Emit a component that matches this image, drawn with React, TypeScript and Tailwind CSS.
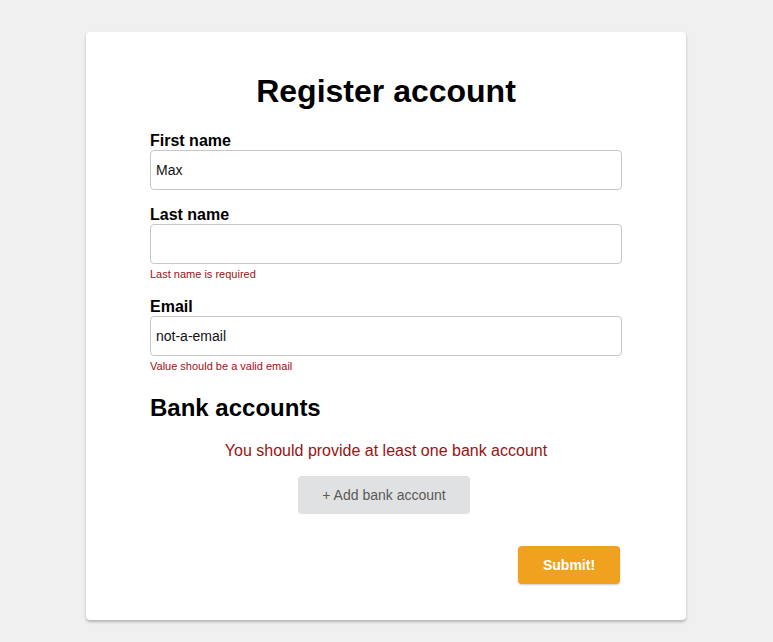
import { useState } from "react";

type FieldProps = {
  label: string;
  value: string;
  error?: string;
  className?: string;
  onChange: (v: string) => void;
};

function Field({ label, value, error, className, onChange }: FieldProps) {
  return (
    <div className={className}>
      <label className="block text-[16px] font-bold leading-[18px] text-black">{label}</label>
      <input
        value={value}
        onChange={(e) => onChange(e.target.value)}
        className="block h-[40px] w-full rounded-[4px] border border-[#c7c7c7] bg-white px-[5px] text-[14px] text-[#111] outline-none"
      />
      {error && <div className="mt-[3px] text-[11px] leading-[14px] text-[#9c1212]">{error}</div>}
    </div>
  );
}

export default function App() {
  const [first, setFirst] = useState("Max");
  const [last, setLast] = useState("");
  const [email, setEmail] = useState("not-a-email");

  return (
    <div className="min-h-[642px] bg-[#f0f0f0] pt-[32px] font-['Liberation_Sans',Arial,sans-serif]">
      <div className="ml-[86px] flex w-[600px] flex-col rounded-[4px] bg-white px-[64px] pb-[36px] pt-[41px] shadow-[0_2px_3px_rgba(0,0,0,0.25)]">
        <h1 className="mb-[22px] text-center text-[32px] font-bold leading-[37px] text-black">Register account</h1>

        <Field label="First name" value={first} onChange={setFirst} />
        <Field className="mt-[16px]" label="Last name" value={last} onChange={setLast} error="Last name is required" />
        <Field className="mt-[17px]" label="Email" value={email} onChange={setEmail} error="Value should be a valid email" />

        <h2 className="mt-[21px] text-[24px] font-bold leading-[28px] text-black">Bank accounts</h2>
        <p className="mt-[20px] text-center text-[16px] leading-[18px] text-[#9c1212]">
          You should provide at least one bank account
        </p>
        <div className="mt-[16px] flex justify-center pr-[4px]">
          <button className="h-[38px] w-[172px] rounded-[4px] bg-[#e0e1e2] text-[14px] text-[#5a5a5a]">
            + Add bank account
          </button>
        </div>

        <div className="mt-[32px] flex justify-end">
          <button className="mr-[2px] h-[38px] w-[102px] rounded-[4px] bg-[#f0a21f] text-[14px] font-bold text-white shadow-[0_1px_2px_rgba(0,0,0,0.2)]">
            Submit!
          </button>
        </div>
      </div>
    </div>
  );
}
